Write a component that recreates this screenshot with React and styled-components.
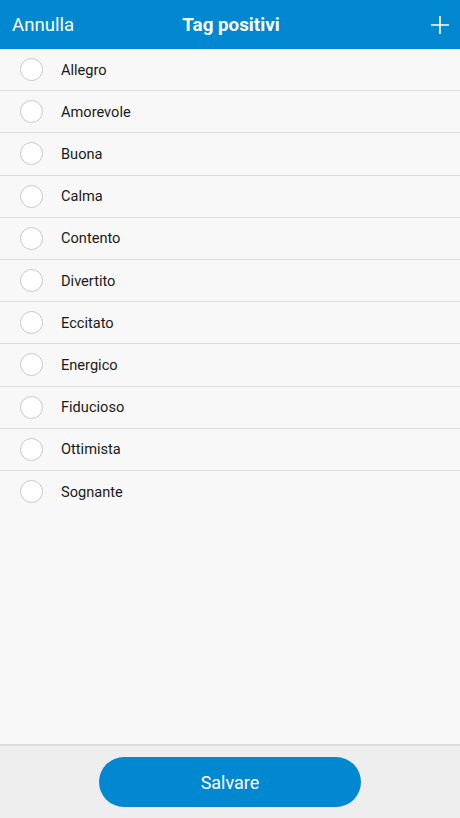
import React from "react";
import styled, { createGlobalStyle } from "styled-components";

const Global = createGlobalStyle`
  html, body { margin: 0; padding: 0; }
  body { font-family: Roboto, "Noto Sans", sans-serif; background: #f8f8f8; }
`;

const Page = styled.div`
  width: 460px;
  height: 818px;
  display: flex;
  flex-direction: column;
  background: #f8f8f8;
`;

const Header = styled.header`
  height: 49px;
  flex: none;
  background: #0288d1;
  display: grid;
  grid-template-columns: 1fr auto 1fr;
  align-items: center;
  padding: 0 10px 0 12px;
  box-sizing: border-box;
  color: #fff;
`;

const Cancel = styled.span`
  font-size: 18.6px;
  justify-self: start;
`;

const Title = styled.h1`
  margin: 0;
  font-size: 18.8px;
  font-weight: 700;
`;

const AddButton = styled.span`
  justify-self: end;
  display: flex;
  width: 20px;
  height: 20px;
`;

const List = styled.ul`
  flex: 1;
  margin: 0;
  padding: 0;
  list-style: none;
`;

const Row = styled.li`
  height: 42.2px;
  box-sizing: border-box;
  display: flex;
  align-items: center;
  padding-left: 20px;
  gap: 18px;
  border-bottom: ${(p) => (p.$last ? "none" : "1px solid #dcdcdc")};
  font-size: 14.6px;
  color: #1a1a1a;
`;

const Radio = styled.span`
  width: 23px;
  height: 23px;
  box-sizing: border-box;
  border-radius: 50%;
  border: 1px solid #c8c8c8;
  background: #fff;
  flex: none;
`;

const Footer = styled.footer`
  height: 74px;
  flex: none;
  background: #eeeeee;
  border-top: 2px solid #dddddd;
  box-sizing: border-box;
  display: flex;
  justify-content: center;
  padding-top: 11px;
`;

const SaveButton = styled.button`
  width: 262px;
  height: 50px;
  border: none;
  border-radius: 25px;
  background: #0288d1;
  color: #fff;
  font-family: Roboto, "Noto Sans", sans-serif;
  font-size: 18px;
`;

const tags = [
  "Allegro",
  "Amorevole",
  "Buona",
  "Calma",
  "Contento",
  "Divertito",
  "Eccitato",
  "Energico",
  "Fiducioso",
  "Ottimista",
  "Sognante",
];

export default function App() {
  return (
    <Page>
      <Global />
      <Header>
        <Cancel>Annulla</Cancel>
        <Title>Tag positivi</Title>
        <AddButton>
          <svg width="20" height="20" viewBox="0 0 20 20">
            <path d="M10 1v18M1 10h18" stroke="#fff" strokeWidth="1.6" fill="none" />
          </svg>
        </AddButton>
      </Header>
      <List>
        {tags.map((t, i) => (
          <Row key={t} $last={i === tags.length - 1}>
            <Radio />
            {t}
          </Row>
        ))}
      </List>
      <Footer>
        <SaveButton>Salvare</SaveButton>
      </Footer>
    </Page>
  );
}
